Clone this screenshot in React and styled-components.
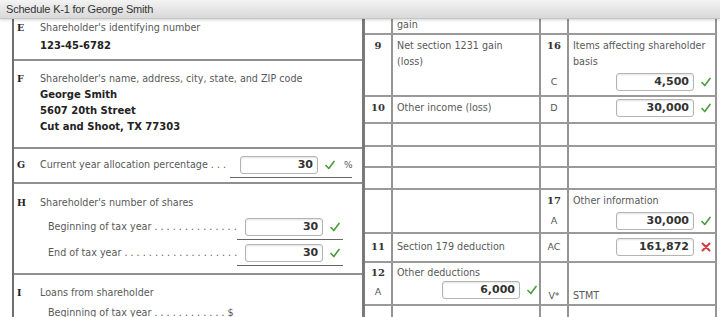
import React from 'react';
import styled, { createGlobalStyle } from 'styled-components';

const GlobalStyle = createGlobalStyle`
  html, body {
    margin: 0;
    padding: 0;
    background: #fff;
  }
  * { box-sizing: border-box; }
`;

const Page = styled.div`
  width: 720px;
  height: 317px;
  overflow: hidden;
  background: #fff;
  font-family: "DejaVu Sans", Verdana, sans-serif;
`;

const TitleBar = styled.div`
  height: 19px;
  padding-left: 6px;
  display: flex;
  align-items: center;
  font-family: "Liberation Sans", Arial, sans-serif;
  font-size: 11px;
  letter-spacing: -0.2px;
  color: #333;
  background: linear-gradient(#f3f3f3, #d9d9d9);
  border-bottom: 1px solid #c4c4c4;
  box-shadow: 0 1px 3px rgba(0, 0, 0, 0.18);
  position: relative;
  z-index: 1;
`;

const Body = styled.div`
  display: flex;
  padding-left: 12px;
`;

/* ---------- left panel ---------- */

const LeftPanel = styled.div`
  width: 350px;
  border-left: 2px solid #6f6f6f;
  display: flex;
  flex-direction: column;
`;

const Section = styled.div`
  display: grid;
  grid-template-columns: 26px 1fr;
  height: ${(p) => p.$h}px;
  padding-top: ${(p) => p.$pt || 0}px;
  border-bottom: ${(p) => (p.$last ? 'none' : '2px solid #909090')};
`;

const Letter = styled.div`
  font-family: "DejaVu Serif", Georgia, serif;
  font-weight: bold;
  font-size: 9.5px;
  color: #222;
  padding-left: 3px;
  line-height: ${(p) => p.$lh || 16}px;
`;

const Label = styled.div`
  font-size: 9.6px;
  color: #595959;
  line-height: ${(p) => p.$lh || 16}px;
  padding-left: ${(p) => p.$indent || 0}px;
  white-space: nowrap;
`;

const Value = styled.div`
  font-size: 10px;
  font-weight: bold;
  color: #222;
  line-height: ${(p) => p.$lh || 16}px;
`;

const FieldRow = styled.div`
  display: flex;
  align-items: flex-start;
  padding-left: ${(p) => p.$indent || 0}px;
  margin-top: ${(p) => p.$mt || 0}px;
`;

const Leader = styled.div`
  flex: 1;
  font-size: 9.6px;
  color: #595959;
  line-height: 18px;
  white-space: nowrap;
  overflow: hidden;
`;

const FieldGroup = styled.div`
  width: ${(p) => p.$w}px;
  margin-right: ${(p) => p.$mr || 0}px;
  padding-left: ${(p) => p.$pl || 0}px;
  padding-bottom: 3px;
  border-bottom: 1.5px solid #666;
  display: flex;
  align-items: center;
  gap: 7px;
`;

const Input = styled.div`
  width: 78px;
  height: 18px;
  border: 1px solid #b4b4b4;
  border-radius: 3px;
  background: #fff;
  box-shadow: inset 0 1px 2px rgba(0, 0, 0, 0.12);
  font-size: 11px;
  font-weight: bold;
  color: #333;
  text-align: right;
  line-height: 16px;
  padding-right: 4px;
  flex-shrink: 0;
`;

const Percent = styled.span`
  font-size: 9px;
  color: #555;
  margin-left: 2px;
`;

const Check = () => (
  <svg width="10" height="10" viewBox="0 0 10 10" style={{ flexShrink: 0 }}>
    <polyline points="1,5.5 3.8,8.5 9,1.5" fill="none" stroke="#4f9f42" strokeWidth="1.7" strokeLinecap="round" strokeLinejoin="round" />
  </svg>
);

const Cross = () => (
  <svg width="10" height="10" viewBox="0 0 10 10" style={{ flexShrink: 0 }}>
    <path d="M1.5 1.5 L8.5 8.5 M8.5 1.5 L1.5 8.5" fill="none" stroke="#d9363e" strokeWidth="2" strokeLinecap="round" />
  </svg>
);

/* ---------- right table ---------- */

const Table = styled.div`
  display: grid;
  grid-template-columns: 28px 148px 28px 148px;
  grid-template-rows: ${(p) => p.$rows};
  border-left: 3px solid #7a7a7a;
`;

const Cell = styled.div`
  border-right: 2px solid #959595;
  border-bottom: 2px solid #9a9a9a;
  padding-top: ${(p) => p.$pt || 0}px;
  padding-left: ${(p) => (p.$center ? 0 : 2)}px;
  padding-right: ${(p) => p.$pr || 0}px;
  text-align: ${(p) => (p.$center ? 'center' : 'left')};
  display: flex;
  flex-direction: column;
  align-items: ${(p) => (p.$center ? 'center' : 'stretch')};
  overflow: hidden;
`;

const Num = styled.div`
  font-family: "DejaVu Serif", Georgia, serif;
  font-weight: bold;
  font-size: 10px;
  color: #333;
  line-height: ${(p) => p.$lh || 16}px;
`;

const Code = styled.div`
  font-size: 9.5px;
  color: #555;
  line-height: ${(p) => p.$lh || 18}px;
  margin-top: ${(p) => p.$mt || 0}px;
`;

const CellText = styled.div`
  font-size: 9.6px;
  color: #595959;
  line-height: ${(p) => p.$lh || 16}px;
  padding-left: 2px;
  margin-top: ${(p) => p.$mt || 0}px;
  white-space: nowrap;
`;

const EntryRow = styled.div`
  display: flex;
  justify-content: flex-end;
  align-items: center;
  gap: 7px;
  margin-top: ${(p) => p.$mt || 0}px;
`;

const Entry = ({ value, bad, mt }) => (
  <EntryRow $mt={mt}>
    <Input>{value}</Input>
    {bad ? <Cross /> : <Check />}
  </EntryRow>
);

const rows = [16, 62, 27, 23, 21, 22, 44, 29, 43, 40].map((h) => `${h}px`).join(' ');

export default function App() {
  return (
    <Page>
      <GlobalStyle />
      <TitleBar>Schedule K-1 for George Smith</TitleBar>
      <Body>
        <LeftPanel>
          <Section $h={42} $pt={0}>
            <Letter $lh={17}>E</Letter>
            <div>
              <Label $lh={17}>Shareholder's identifying number</Label>
              <Value $lh={19}>123-45-6782</Value>
            </div>
          </Section>

          <Section $h={88} $pt={10}>
            <Letter>F</Letter>
            <div>
              <Label>Shareholder's name, address, city, state, and ZIP code</Label>
              <Value>George Smith</Value>
              <Value>5607 20th Street</Value>
              <Value>Cut and Shoot, TX 77303</Value>
            </div>
          </Section>

          <Section $h={35} $pt={7}>
            <Letter $lh={18}>G</Letter>
            <FieldRow>
              <Leader>Current year allocation percentage . . .</Leader>
              <FieldGroup $w={122} $mr={10} $pl={10}>
                <Input>30</Input>
                <Check />
                <Percent>%</Percent>
              </FieldGroup>
            </FieldRow>
          </Section>

          <Section $h={91} $pt={11}>
            <Letter>H</Letter>
            <div>
              <Label>Shareholder's number of shares</Label>
              <FieldRow $indent={8} $mt={7}>
                <Leader>Beginning of tax year . . . . . . . . . . . . . .</Leader>
                <FieldGroup $w={106} $mr={21} $pl={8}>
                  <Input>30</Input>
                  <Check />
                </FieldGroup>
              </FieldRow>
              <FieldRow $indent={8} $mt={4}>
                <Leader>End of tax year . . . . . . . . . . . . . . . . . . .</Leader>
                <FieldGroup $w={106} $mr={21} $pl={8}>
                  <Input>30</Input>
                  <Check />
                </FieldGroup>
              </FieldRow>
            </div>
          </Section>

          <Section $h={60} $pt={10} $last>
            <Letter>I</Letter>
            <div>
              <Label>Loans from shareholder</Label>
              <Label $lh={23} $indent={8}>
                Beginning of tax year . . . . . . . . . . . . $
              </Label>
            </div>
          </Section>
        </LeftPanel>

        <Table $rows={rows}>
          {/* gain row */}
          <Cell $center />
          <Cell><CellText $lh={12}>gain</CellText></Cell>
          <Cell $center />
          <Cell />

          {/* 9 / 16 */}
          <Cell $center $pt={3}><Num>9</Num></Cell>
          <Cell $pt={3}>
            <CellText>Net section 1231 gain</CellText>
            <CellText>(loss)</CellText>
          </Cell>
          <Cell $center $pt={3}>
            <Num>16</Num>
            <Code $mt={19}>C</Code>
          </Cell>
          <Cell $pt={3} $pr={4}>
            <CellText>Items affecting shareholder</CellText>
            <CellText>basis</CellText>
            <Entry value="4,500" mt={3} />
          </Cell>

          {/* 10 / D */}
          <Cell $center $pt={2}><Num $lh={18}>10</Num></Cell>
          <Cell $pt={2}><CellText $lh={18}>Other income (loss)</CellText></Cell>
          <Cell $center $pt={2}><Code>D</Code></Cell>
          <Cell $pt={2} $pr={4}><Entry value="30,000" /></Cell>

          {/* empty rows */}
          {Array.from({ length: 12 }).map((_, i) => (
            <Cell key={i} $center={i % 2 === 0} />
          ))}

          {/* 17 / A */}
          <Cell $center />
          <Cell />
          <Cell $center $pt={3}>
            <Num>17</Num>
            <Code $mt={3}>A</Code>
          </Cell>
          <Cell $pt={3} $pr={4}>
            <CellText>Other information</CellText>
            <Entry value="30,000" mt={3} />
          </Cell>

          {/* 11 / AC */}
          <Cell $center $pt={4}><Num $lh={18}>11</Num></Cell>
          <Cell $pt={4}><CellText $lh={18}>Section 179 deduction</CellText></Cell>
          <Cell $center $pt={4}><Code>AC</Code></Cell>
          <Cell $pt={4} $pr={4}><Entry value="161,872" bad /></Cell>

          {/* 12 / V* */}
          <Cell $center $pt={2}>
            <Num>12</Num>
            <Code $mt={2}>A</Code>
          </Cell>
          <Cell $pt={2} $pr={2}>
            <CellText>Other deductions</CellText>
            <Entry value="6,000" mt={0} />
          </Cell>
          <Cell $center $pt={25}><Code $lh={16}>V*</Code></Cell>
          <Cell $pt={25}><CellText>STMT</CellText></Cell>

          {/* trailing row */}
          <Cell $center />
          <Cell />
          <Cell $center />
          <Cell />
        </Table>
      </Body>
    </Page>
  );
}
